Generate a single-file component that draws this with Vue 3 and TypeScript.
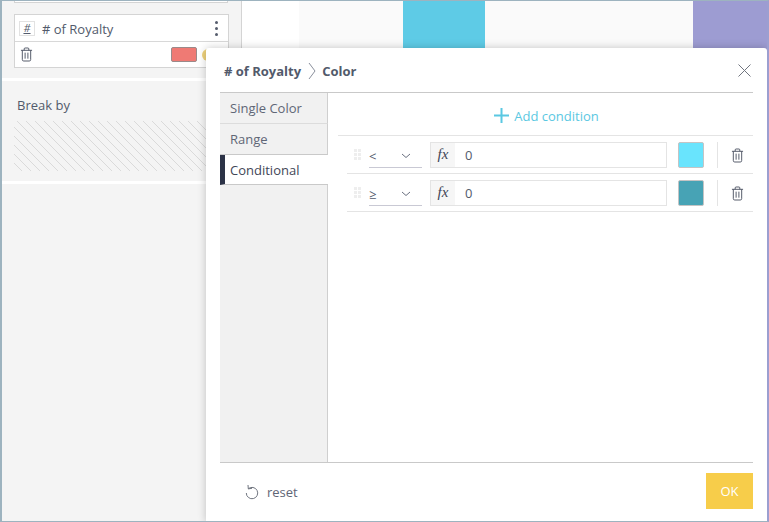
<script setup lang="ts">
interface Cond { op: string; color: string }
const conds: Cond[] = [
  { op: '<', color: '#69e4fd' },
  { op: '≥', color: '#47a3b5' },
]
const tabs = ['Single Color', 'Range', 'Conditional']
</script>

<template>
  <div class="frame">
    <aside class="side">
      <div class="stub"></div>
      <div class="card">
        <div class="card-top">
          <span class="hash">#</span>
          <span class="name"># of Royalty</span>
          <span class="dots"><i></i><i></i><i></i></span>
        </div>
        <div class="card-bottom">
          <svg class="trash" width="13" height="15" viewBox="0 0 14 16" fill="none" stroke="#4a5060" stroke-width="1">
            <path d="M1 3.500h12M4.500 3.500V2q0-1 1-1h3q1 0 1 1v1.500M2.500 3.500v10q0 1.500 1.500 1.500h6q1.500 0 1.500-1.500v-10M5.500 6v6.500M8.500 6v6.500" />
          </svg>
          <span class="swatch"></span>
          <span class="dot"></span>
        </div>
      </div>
      <div class="sep first"></div>
      <div class="break-label">Break by</div>
      <div class="hatch"></div>
      <div class="sep"></div>
    </aside>
    <main class="chart">
      <div class="gap-w"></div>
      <div class="gap-g"></div>
      <div class="bar-b"></div>
      <div class="gap-g2"></div>
      <div class="bar-p"></div>
    </main>

    <section class="modal">
      <header class="head">
        <span class="crumb"># of Royalty</span>
        <svg class="chev" width="8" height="18" viewBox="0 0 8 18" fill="none" stroke="#8a8f9c" stroke-width="1"><path d="M1 1l6 8-6 8" /></svg>
        <span class="crumb">Color</span>
        <svg class="close" width="13" height="13" viewBox="0 0 13 13" fill="none" stroke="#70757f" stroke-width="1"><path d="M.5.500l12 12M12.500.500l-12 12" /></svg>
      </header>
      <div class="body">
        <nav class="tabs">
          <div v-for="t in tabs" :key="t" class="tab" :class="{ active: t === 'Conditional' }">{{ t }}</div>
          <div class="tab-fill"></div>
        </nav>
        <div class="pane">
          <div class="add">
            <svg width="15" height="15" viewBox="0 0 15 15" stroke="#5ac8e2" stroke-width="2"><path d="M7.500 0v15M0 7.500h15" /></svg>
            <span>Add condition</span>
          </div>
          <div class="rows">
            <div v-for="(c, i) in conds" :key="i" class="row">
              <span class="grip"><i v-for="n in 6" :key="n"></i></span>
              <div class="select">
                <span>{{ c.op }}</span>
                <svg width="10" height="6" viewBox="0 0 10 6" fill="none" stroke="#6a7080" stroke-width="1"><path d="M1 1l4 3.500L9 1" /></svg>
              </div>
              <div class="input">
                <span class="fx">fx</span>
                <span class="val">0</span>
              </div>
              <span class="color" :style="{ background: c.color }"></span>
              <span class="vline"></span>
              <svg class="row-trash" width="13" height="15" viewBox="0 0 14 16" fill="none" stroke="#4a5060" stroke-width="1">
                <path d="M1 3.500h12M4.500 3.500V2q0-1 1-1h3q1 0 1 1v1.500M2.500 3.500v10q0 1.500 1.500 1.500h6q1.500 0 1.500-1.500v-10M5.500 6v6.500M8.500 6v6.500" />
              </svg>
            </div>
          </div>
        </div>
      </div>
      <footer class="foot">
        <div class="reset">
          <svg width="14" height="16" viewBox="0 0 14 16" fill="none" stroke="#70757f" stroke-width="1"><path d="M3.200 4.800A5.700 5.700 0 1 1 1.300 9M3 1l.3 3.900 3.700-.6" /></svg>
          <span>reset</span>
        </div>
        <button class="ok">OK</button>
      </footer>
    </section>
  </div>
</template>

<style>
html, body { margin: 0; padding: 0; }
</style>

<style scoped>
.frame {
  position: relative;
  width: 769px;
  height: 522px;
  box-sizing: border-box;
  display: flex;
  overflow: hidden;
  border-style: solid;
  border-color: #9db3bf #9c9fd0 #9db3bf #9db3bf;
  border-width: 1px 2px 1px 2px;
  font-family: "Open Sans", sans-serif;
  font-size: 13px;
  color: #525a6b;
}
.side {
  width: 240px;
  flex: none;
  box-sizing: border-box;
  background: #f4f4f4;
  border-right: 1px solid #d4d4d4;
}
.stub {
  width: 214px;
  margin-left: 12px;
  height: 2px;
  box-sizing: border-box;
  background: #fff;
  border: 1px solid #d4d4d4;
  border-top: none;
}
.card {
  margin: 11px 0 0 12px;
  width: 215px;
  height: 54px;
  box-sizing: border-box;
  background: #fff;
  border: 1px solid #d4d4d4;
}
.card-top {
  height: 27px;
  box-sizing: border-box;
  border-bottom: 1px solid #d8d8d8;
  display: flex;
  align-items: center;
  padding-left: 4px;
}
.hash {
  width: 16px;
  height: 15px;
  box-sizing: border-box;
  border: 1px solid #e2e2e2;
  font-size: 11px;
  line-height: 11px;
  text-align: center;
  font-style: italic;
  text-decoration: underline;
  color: #555c6c;
}
.name { margin-left: 7px; padding-top: 2px; }
.dots {
  margin-left: auto;
  margin-right: 10px;
  display: flex;
  flex-direction: column;
  gap: 3px;
}
.dots i { width: 3px; height: 3px; border-radius: 50%; background: #555c6c; display: block; }
.card-bottom {
  display: flex;
  align-items: center;
  height: 25px;
  padding-left: 5px;
  box-sizing: border-box;
}
.swatch {
  margin-left: 138px;
  width: 26px;
  height: 15px;
  box-sizing: border-box;
  background: #ef7a74;
  border: 1px solid #9a8a8a;
  border-radius: 2px;
}
.dot {
  margin-left: 5px;
  width: 12px;
  height: 12px;
  border-radius: 50%;
  background: #efd27c;
}
.sep { height: 3px; background: #fff; }
.sep.first { margin-top: 10px; }
.break-label {
  margin: 15px 0 0 15px;
  line-height: 18px;
}
.hatch {
  margin: 7px 0 10px 12px;
  width: 226px;
  height: 50px;
  background: repeating-linear-gradient(45deg, transparent 0 5.360px, #dadada 5.360px 6.360px);
}
.chart {
  flex: 1;
  display: flex;
  height: 60px;
  background: #fff;
}
.gap-w { width: 57px; }
.gap-g { width: 104px; background: #fafafa; }
.bar-b { width: 82px; background: #5ecbe6; }
.gap-g2 { width: 208px; background: #fafafa; }
.bar-p { flex: 1; background: #9d9cd2; }
.modal {
  position: absolute;
  left: 204px;
  top: 47px;
  width: 561px;
  height: 474px;
  box-sizing: border-box;
  background: #fff;
  border-radius: 3px 3px 0 0;
  box-shadow: 0 0 8px rgba(0, 0, 0, 0.22);
  padding: 0 14px;
  display: flex;
  flex-direction: column;
}
.head {
  height: 45px;
  flex: none;
  box-sizing: border-box;
  border-bottom: 1px solid #c9c9c9;
  display: flex;
  align-items: center;
  padding: 1px 0 0 4px;
}
.crumb { font-weight: 700; font-size: 13px; color: #525a6b; }
.chev { margin: 0 6px 0 7px; }
.close { margin-left: auto; margin-right: 2px; }
.body { flex: 1; display: flex; min-height: 0; }
.tabs {
  width: 108px;
  flex: none;
  display: flex;
  flex-direction: column;
  box-sizing: border-box;
  background: #f1f1f1;
}
.tab {
  height: 31px;
  box-sizing: border-box;
  border-right: 1px solid #cfcfcf;
  border-bottom: 1px solid #dcdcdc;
  padding-left: 10px;
  line-height: 30px;
  color: #5f6676;
}
.tab:nth-child(2) { border-bottom-color: #c9c9c9; }
.tab.active {
  height: 30px;
  background: #fff;
  border-right: none;
  border-bottom: 1px solid #c9c9c9;
  border-left: 5px solid #2c3347;
  padding-left: 5px;
  color: #3f4657;
}
.tab-fill { flex: 1; border-right: 1px solid #cfcfcf; }
.pane { flex: 1; padding-left: 10px; min-width: 0; }
.add {
  height: 43px;
  box-sizing: border-box;
  border-bottom: 1px solid #e4e4e4;
  display: flex;
  align-items: center;
  justify-content: center;
  gap: 5px;
  color: #5ac8e2;
  padding: 3px 0 0 2px;
}
.rows { padding-left: 9px; }
.row {
  height: 38px;
  box-sizing: border-box;
  border-bottom: 1px solid #e4e4e4;
  display: flex;
  align-items: center;
}
.grip {
  width: 7px;
  display: grid;
  grid-template-columns: 3px 3px;
  gap: 1px;
  margin-left: 7px;
}
.grip i { width: 3px; height: 3px; background: #eeeeee; display: block; }
.select {
  margin-left: 8px;
  width: 53px;
  height: 26px;
  box-sizing: border-box;
  border-bottom: 1px solid #c9c9d4;
  display: flex;
  align-items: center;
  justify-content: space-between;
  padding: 3px 11px 0 0;
}
.input {
  margin-left: 8px;
  width: 237px;
  height: 26px;
  box-sizing: border-box;
  border: 1px solid #e4e4e4;
  display: flex;
  align-items: center;
}
.fx {
  width: 24px;
  height: 100%;
  background: #f6f6f6;
  font-family: "Liberation Serif", serif;
  font-style: italic;
  font-size: 15px;
  line-height: 23px;
  text-align: center;
  color: #3f4657;
}
.val { margin-left: 10px; }
.color {
  margin-left: 11px;
  width: 26px;
  height: 26px;
  box-sizing: border-box;
  border: 1px solid #c4c4c4;
  border-radius: 2px;
}
.vline { margin-left: 13px; width: 1px; height: 26px; background: #e4e4e4; }
.row-trash { margin: 1px 0 0 13px; }
.foot {
  height: 60px;
  flex: none;
  box-sizing: border-box;
  border-top: 1px solid #c9c9c9;
  display: flex;
  justify-content: space-between;
  padding: 10px 0 13px 25px;
}
.reset {
  display: flex;
  align-items: center;
  gap: 8px;
  color: #5f6676;
  padding-top: 2px;
}
.ok {
  width: 47px;
  height: 36px;
  border: none;
  padding: 0;
  background: #f7cd4a;
  color: #fff;
  font-family: "Open Sans", sans-serif;
  font-size: 13px;
}
</style>
